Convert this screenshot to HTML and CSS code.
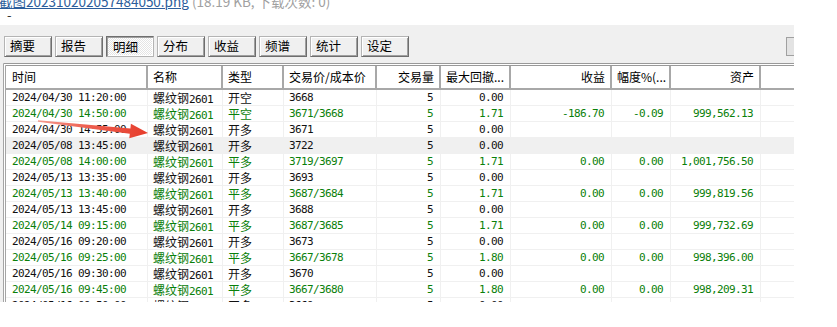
FILE: index.html
```html
<!DOCTYPE html>
<html lang="zh-CN">
<head>
    <meta charset="UTF-8">
    <meta name="viewport" content="width=device-width, initial-scale=1.0">
    <title>明细</title>
    <link rel="stylesheet" href="styles.css">
</head>
<body>
    <div class="attach">
        <p class="file"><a href="#">截图202310202057484050.png</a> <span class="meta">(18.19 KB, 下载次数: 0)</span></p>
        <p class="dash">-</p>
    </div>

    <div class="panel">
        <div class="tabs">
            <span class="tab">摘要</span>
            <span class="tab">报告</span>
            <span class="tab active">明细</span>
            <span class="tab">分布</span>
            <span class="tab">收益</span>
            <span class="tab">频谱</span>
            <span class="tab">统计</span>
            <span class="tab">设定</span>
            <span class="stub"></span>
        </div>

        <div class="grid">
            <div class="row head">
                <div class="c">时间</div>
                <div class="c">名称</div>
                <div class="c">类型</div>
                <div class="c">交易价/成本价</div>
                <div class="c r">交易量</div>
                <div class="c r">最大回撤...</div>
                <div class="c r">收益</div>
                <div class="c r">幅度%(...</div>
                <div class="c r">资产</div>
                <div class="c blank"></div>
            </div>

            <div class="row">
                <div class="c">2024/04/30 11:20:00</div>
                <div class="c"><span class="cn">螺纹钢</span>2601</div>
                <div class="c cn">开空</div>
                <div class="c">3668</div>
                <div class="c r">5</div>
                <div class="c r">0.00</div>
                <div class="c r"></div>
                <div class="c r"></div>
                <div class="c r"></div>
                <div class="c"></div>
            </div>
            <div class="row win">
                <div class="c">2024/04/30 14:50:00</div>
                <div class="c"><span class="cn">螺纹钢</span>2601</div>
                <div class="c cn">平空</div>
                <div class="c">3671/3668</div>
                <div class="c r">5</div>
                <div class="c r">1.71</div>
                <div class="c r">-186.70</div>
                <div class="c r">-0.09</div>
                <div class="c r">999,562.13</div>
                <div class="c"></div>
            </div>
            <div class="row">
                <div class="c">2024/04/30 14:55:00</div>
                <div class="c"><span class="cn">螺纹钢</span>2601</div>
                <div class="c cn">开多</div>
                <div class="c">3671</div>
                <div class="c r">5</div>
                <div class="c r">0.00</div>
                <div class="c r"></div>
                <div class="c r"></div>
                <div class="c r"></div>
                <div class="c"></div>
            </div>
            <div class="row selected">
                <div class="c">2024/05/08 13:45:00</div>
                <div class="c"><span class="cn">螺纹钢</span>2601</div>
                <div class="c cn">开多</div>
                <div class="c">3722</div>
                <div class="c r">5</div>
                <div class="c r">0.00</div>
                <div class="c r"></div>
                <div class="c r"></div>
                <div class="c r"></div>
                <div class="c"></div>
            </div>
            <div class="row win">
                <div class="c">2024/05/08 14:00:00</div>
                <div class="c"><span class="cn">螺纹钢</span>2601</div>
                <div class="c cn">平多</div>
                <div class="c">3719/3697</div>
                <div class="c r">5</div>
                <div class="c r">1.71</div>
                <div class="c r">0.00</div>
                <div class="c r">0.00</div>
                <div class="c r">1,001,756.50</div>
                <div class="c"></div>
            </div>
            <div class="row">
                <div class="c">2024/05/13 13:35:00</div>
                <div class="c"><span class="cn">螺纹钢</span>2601</div>
                <div class="c cn">开多</div>
                <div class="c">3693</div>
                <div class="c r">5</div>
                <div class="c r">0.00</div>
                <div class="c r"></div>
                <div class="c r"></div>
                <div class="c r"></div>
                <div class="c"></div>
            </div>
            <div class="row win">
                <div class="c">2024/05/13 13:40:00</div>
                <div class="c"><span class="cn">螺纹钢</span>2601</div>
                <div class="c cn">平多</div>
                <div class="c">3687/3684</div>
                <div class="c r">5</div>
                <div class="c r">1.71</div>
                <div class="c r">0.00</div>
                <div class="c r">0.00</div>
                <div class="c r">999,819.56</div>
                <div class="c"></div>
            </div>
            <div class="row">
                <div class="c">2024/05/13 13:45:00</div>
                <div class="c"><span class="cn">螺纹钢</span>2601</div>
                <div class="c cn">开多</div>
                <div class="c">3688</div>
                <div class="c r">5</div>
                <div class="c r">0.00</div>
                <div class="c r"></div>
                <div class="c r"></div>
                <div class="c r"></div>
                <div class="c"></div>
            </div>
            <div class="row win">
                <div class="c">2024/05/14 09:15:00</div>
                <div class="c"><span class="cn">螺纹钢</span>2601</div>
                <div class="c cn">平多</div>
                <div class="c">3687/3685</div>
                <div class="c r">5</div>
                <div class="c r">1.71</div>
                <div class="c r">0.00</div>
                <div class="c r">0.00</div>
                <div class="c r">999,732.69</div>
                <div class="c"></div>
            </div>
            <div class="row">
                <div class="c">2024/05/16 09:20:00</div>
                <div class="c"><span class="cn">螺纹钢</span>2601</div>
                <div class="c cn">开多</div>
                <div class="c">3673</div>
                <div class="c r">5</div>
                <div class="c r">0.00</div>
                <div class="c r"></div>
                <div class="c r"></div>
                <div class="c r"></div>
                <div class="c"></div>
            </div>
            <div class="row win">
                <div class="c">2024/05/16 09:25:00</div>
                <div class="c"><span class="cn">螺纹钢</span>2601</div>
                <div class="c cn">平多</div>
                <div class="c">3667/3678</div>
                <div class="c r">5</div>
                <div class="c r">1.80</div>
                <div class="c r">0.00</div>
                <div class="c r">0.00</div>
                <div class="c r">998,396.00</div>
                <div class="c"></div>
            </div>
            <div class="row">
                <div class="c">2024/05/16 09:30:00</div>
                <div class="c"><span class="cn">螺纹钢</span>2601</div>
                <div class="c cn">开多</div>
                <div class="c">3670</div>
                <div class="c r">5</div>
                <div class="c r">0.00</div>
                <div class="c r"></div>
                <div class="c r"></div>
                <div class="c r"></div>
                <div class="c"></div>
            </div>
            <div class="row win">
                <div class="c">2024/05/16 09:45:00</div>
                <div class="c"><span class="cn">螺纹钢</span>2601</div>
                <div class="c cn">平多</div>
                <div class="c">3667/3680</div>
                <div class="c r">5</div>
                <div class="c r">1.80</div>
                <div class="c r">0.00</div>
                <div class="c r">0.00</div>
                <div class="c r">998,209.31</div>
                <div class="c"></div>
            </div>
            <div class="row">
                <div class="c">2024/05/16 09:50:00</div>
                <div class="c"><span class="cn">螺纹钢</span>2601</div>
                <div class="c cn">开多</div>
                <div class="c">3669</div>
                <div class="c r">5</div>
                <div class="c r">0.00</div>
                <div class="c r"></div>
                <div class="c r"></div>
                <div class="c r"></div>
                <div class="c"></div>
            </div>
        </div>
    </div>

    <!-- annotation arrow drawn over the list -->
    <svg class="arrow" width="125" height="30" viewBox="30 112 125 30">
        <defs>
            <linearGradient id="fade" x1="38" y1="121" x2="148" y2="133" gradientUnits="userSpaceOnUse">
                <stop offset="0" stop-color="#f49b90"/>
                <stop offset="0.45" stop-color="#ee5f50"/>
                <stop offset="1" stop-color="#e63d2c"/>
            </linearGradient>
        </defs>
        <polygon fill="url(#fade)" points="38,120.2 130.4,128.4 130.9,123.8 148,133 129.3,138.3 129.8,133.7 37.9,121.8"/>
    </svg>
</body>
</html>
```

FILE: styles.css
```css
* {
    margin: 0;
    padding: 0;
    box-sizing: border-box;
}

html, body {
    background: #ffffff;
}

body {
    position: relative;
    width: 837px;
    height: 327px;
    overflow: hidden;
    font-family: "Noto Sans CJK SC", sans-serif;
}

/* attachment line, cut off at the top */
.attach {
    height: 25px;
    overflow: hidden;
}

.file {
    margin: -5px 0 0 -1px;
    font-size: 13.5px;
    line-height: 13px;
    white-space: nowrap;
}

.file a {
    color: #2b5d9b;
    text-decoration: underline;
}

.file .meta {
    color: #a0a0a0;
}

.dash {
    padding: 1px 0 0 7px;
    font-size: 13px;
    line-height: 11px;
    color: #333333;
}

/* report window */
.panel {
    width: 794px;
    height: 277px;
    background: #f0f0f0;
    overflow: hidden;
}

.tabs {
    display: flex;
    gap: 3px;
    height: 32px;
    padding: 11px 0 0 4px;
}

.tab {
    width: 48px;
    height: 21px;
    padding-left: 5px;
    border: 1px solid;
    border-color: #b4b4b4 #6e6e6e #6e6e6e #b4b4b4;
    box-shadow: inset 1px 1px #ffffff, inset -1px -1px #a0a0a0;
    background: #f0f0f0;
    font-size: 12.5px;
    line-height: 18px;
    color: #000000;
}

.tab.active {
    padding: 1px 0 0 6px;
    border-color: #6e6e6e #b4b4b4 #b4b4b4 #6e6e6e;
    box-shadow: inset 1px 1px #a0a0a0, inset -1px -1px #ffffff;
    background: repeating-conic-gradient(#ffffff 0 25%, #e4e4e4 0 50%) 0 0 / 2px 2px;
}

.stub {
    width: 20px;
    height: 19px;
    margin: 1px -12px 0 auto;
    border: 1px solid #a0a0a0;
    background: #e3e3e3;
}

.grid {
    width: 830px;
    height: 240px;
    margin: 6px 0 0 3px;
    border-top: 3px double #999999;
    border-left: 3px double #a5a5a5;
    background: #ffffff;
}

.row {
    display: grid;
    grid-template-columns: 142px 75px 61px 93px 64px 70px 101px 59px 90px 70px;
    height: 16px;
    border-bottom: 1px solid #f0f0f0;
    font-family: "DejaVu Sans Mono", monospace;
    font-size: 11px;
    letter-spacing: -0.62px;
    line-height: 15px;
    color: #111111;
}

.row.win {
    color: #0a800a;
}

.row.selected {
    background: #f0f0f0;
}

.c {
    padding: 0 7px 0 5px;
    border-right: 1px solid #f0f0f0;
    white-space: nowrap;
    overflow: hidden;
}

.c:first-child {
    padding-left: 6px;
}

.c.r {
    text-align: right;
}

.cn {
    font-family: "Noto Sans CJK SC", sans-serif;
    font-size: 12px;
    letter-spacing: 0;
    line-height: 15px;
    color: inherit;
}

.row.head {
    height: 24px;
    border-bottom: 2px solid #a8a8a8;
    font-family: "Noto Sans CJK SC", sans-serif;
    font-size: 12px;
    letter-spacing: 0;
    line-height: 22px;
    color: #000000;
}

.row.head .c {
    padding-right: 5px;
    border-right: 2px solid #a8a8a8;
}

.row.head .c.blank {
    border-right: none;
}

.arrow {
    position: absolute;
    left: 30px;
    top: 112px;
}
```
